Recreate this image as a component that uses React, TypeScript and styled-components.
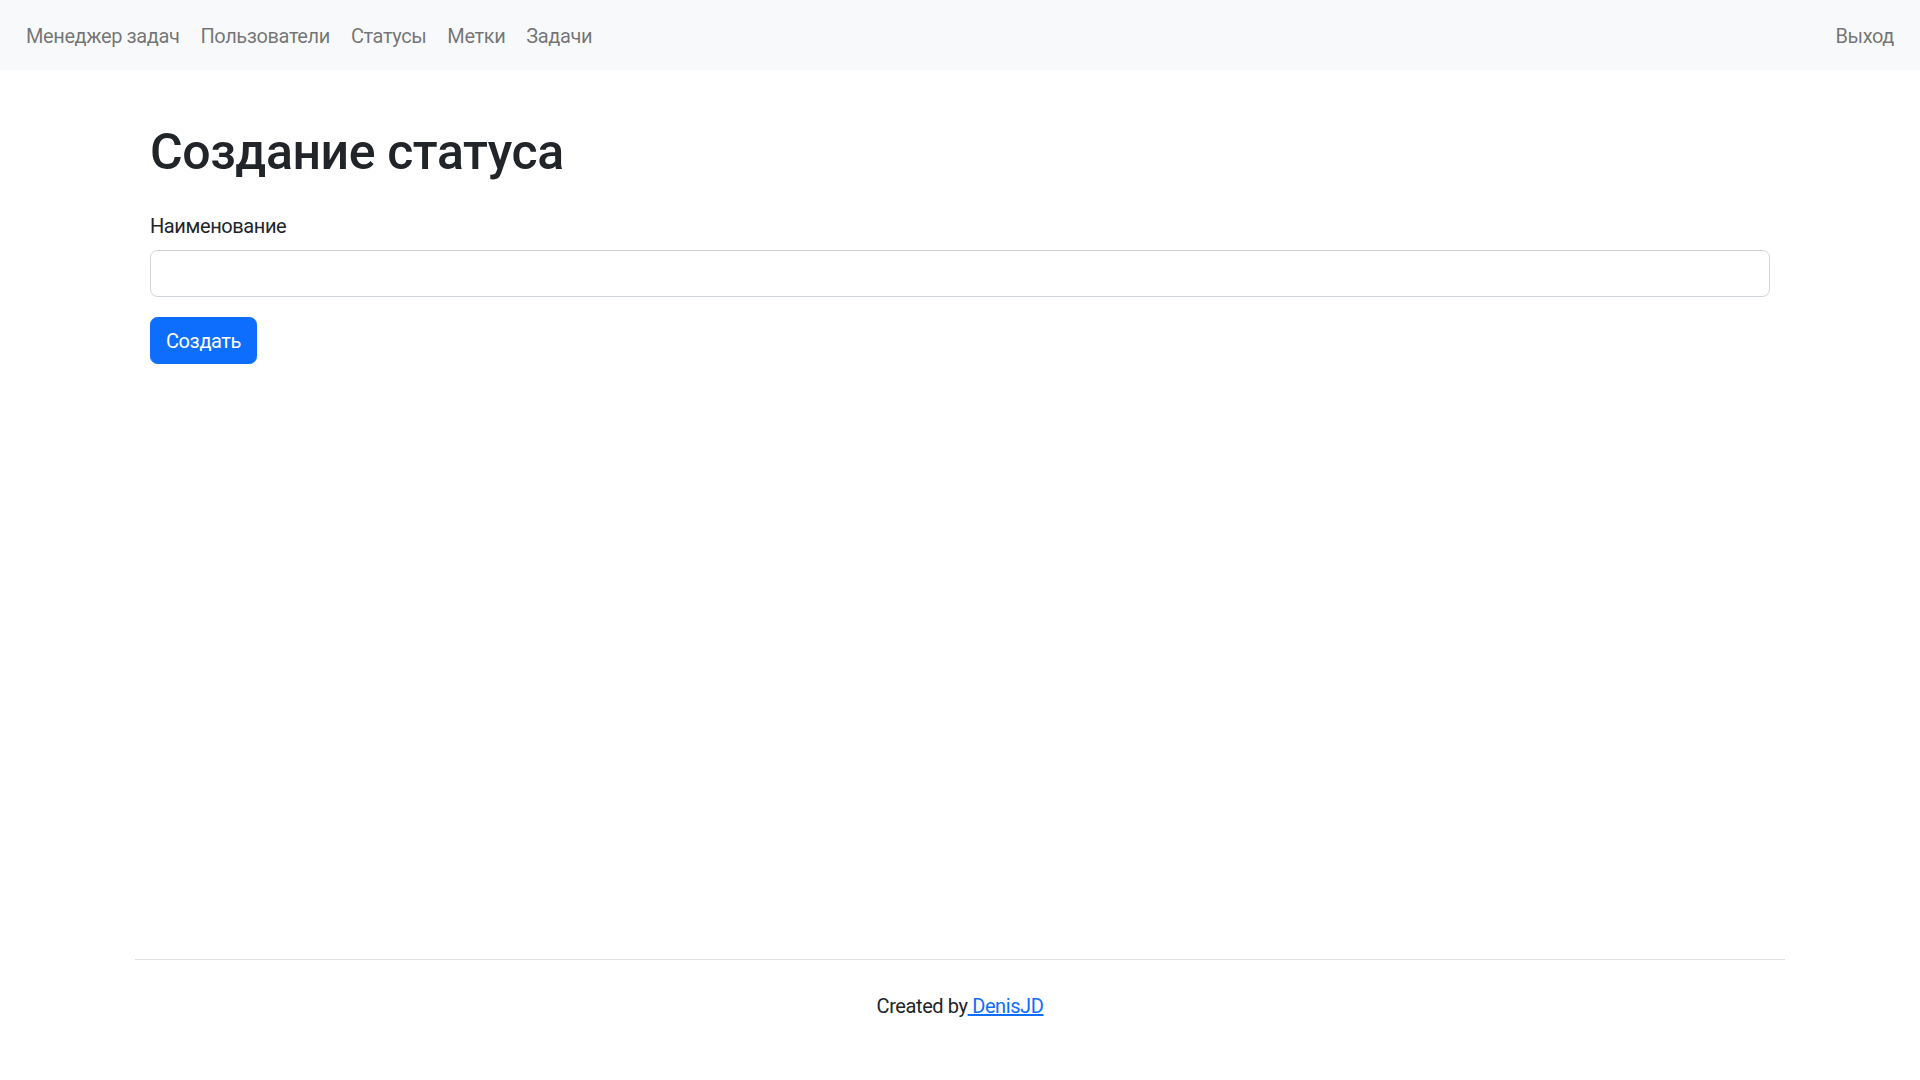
import React from "react";
import styled, { createGlobalStyle } from "styled-components";

const GlobalStyle = createGlobalStyle`
  * { box-sizing: border-box; }
  html, body { margin: 0; padding: 0; }
  body {
    font-family: Roboto, "Noto Sans", "Liberation Sans", sans-serif;
    letter-spacing: -0.025em;
    color: #212529;
    background: #ffffff;
    -webkit-font-smoothing: antialiased;
  }
`;

const Page = styled.div`
  min-height: 100vh;
  display: flex;
  flex-direction: column;
`;

const Navbar = styled.nav`
  height: 70px;
  background: #f8f9fa;
  display: flex;
  align-items: center;
  justify-content: space-between;
  padding: 1px 26px 0;
`;

const NavGroup = styled.div`
  display: flex;
  align-items: center;
  gap: 21px;
`;

const NavLink = styled.a`
  font-size: 20px;
  line-height: 30px;
  color: rgba(0, 0, 0, 0.55);
  text-decoration: none;
  cursor: pointer;
`;

const Main = styled.main`
  flex: 1;
  width: 1650px;
  margin: 0 auto;
  padding: 52px 15px 0;
`;

const Title = styled.h1`
  margin: 0 0 29px;
  font-size: 50px;
  line-height: 60px;
  font-weight: 500;
  color: #212529;
`;

const Form = styled.form`
  display: flex;
  flex-direction: column;
  align-items: flex-start;
`;

const Field = styled.div`
  width: 100%;
  margin-bottom: 20px;
`;

const Label = styled.label`
  display: block;
  font-size: 20px;
  line-height: 30px;
  margin-bottom: 9px;
`;

const Input = styled.input`
  display: block;
  width: 100%;
  height: 47px;
  padding: 7px 15px;
  font-size: 20px;
  font-family: inherit;
  color: #212529;
  background: #fff;
  border: 1px solid #ced4da;
  border-radius: 7.5px;
  outline: none;
`;

const Button = styled.button`
  height: 47px;
  padding: 0 15px;
  font-family: inherit;
  letter-spacing: inherit;
  font-size: 20px;
  line-height: 30px;
  color: #fff;
  background: #0d6efd;
  border: 1px solid #0d6efd;
  border-radius: 7.5px;
  cursor: pointer;
`;

const Footer = styled.footer`
  width: 1650px;
  margin: 0 auto;
  padding-bottom: 59px;
`;

const Rule = styled.hr`
  margin: 0 0 31px;
  border: 0;
  border-top: 1px solid #dedede;
`;

const FooterText = styled.p`
  margin: 0;
  text-align: center;
  font-size: 20px;
  line-height: 30px;
  color: #212529;
`;

const FooterLink = styled.a`
  color: #0d6efd;
  text-decoration: underline;
  white-space: pre;
`;

export default function App() {
  return (
    <>
      <GlobalStyle />
      <Page>
        <Navbar>
          <NavGroup>
            <NavLink>Менеджер задач</NavLink>
            <NavLink>Пользователи</NavLink>
            <NavLink>Статусы</NavLink>
            <NavLink>Метки</NavLink>
            <NavLink>Задачи</NavLink>
          </NavGroup>
          <NavGroup>
            <NavLink>Выход</NavLink>
          </NavGroup>
        </Navbar>
        <Main>
          <Title>Создание статуса</Title>
          <Form onSubmit={(e) => e.preventDefault()}>
            <Field>
              <Label htmlFor="name">Наименование</Label>
              <Input id="name" type="text" />
            </Field>
            <Button type="submit">Создать</Button>
          </Form>
        </Main>
        <Footer>
          <Rule />
          <FooterText>
            Created by<FooterLink> DenisJD</FooterLink>
          </FooterText>
        </Footer>
      </Page>
    </>
  );
}
